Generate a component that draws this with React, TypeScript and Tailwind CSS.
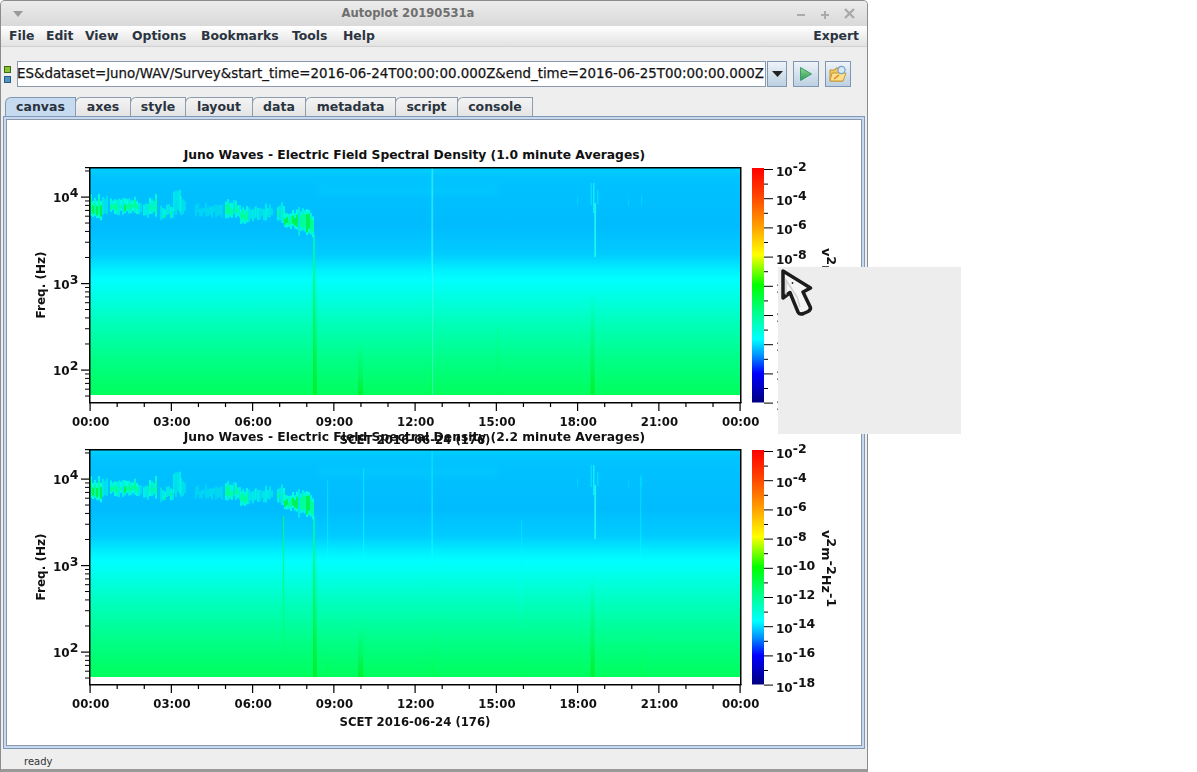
import React from "react";

const FONT = "'DejaVu Sans', sans-serif";

function rng(seed: number) {
  let s = seed;
  return () => {
    s = (s * 16807) % 2147483647;
    return (s - 1) / 2147483646;
  };
}

// [x0, x1, top, bottom, strength] in page coordinates
const BLOBS: [number, number, number, number, number][] = [
  [90, 102, 196, 220, 0.95],
  [102, 108, 196, 214, 0.45],
  [110, 124, 196, 214, 0.75],
  [124, 138, 198, 214, 1],
  [138, 141, 205, 214, 0.55],
  [143, 149, 205, 219, 0.75],
  [149, 157, 196, 215, 0.8],
  [160, 173, 205, 218, 0.6],
  [173, 180, 190, 213, 0.5],
  [180, 186, 198, 213, 0.4],
  [195, 205, 205, 215, 0.18],
  [205, 222, 204, 216, 0.22],
  [225, 240, 201, 218, 0.7],
  [240, 255, 206, 222, 0.65],
  [255, 273, 205, 219, 0.55],
  [277, 284, 204, 222, 0.65],
  [284, 298, 211, 228, 1.15],
  [298, 308, 208, 234, 0.85],
  [308, 314, 212, 237, 1],
];

function Blobs({ seed }: { seed: number }) {
  const r = rng(seed);
  const cols: React.ReactNode[] = [];
  for (const [x0, x1, t, b, s] of BLOBS) {
    for (let x = x0; x < x1; x += 2) {
      const top = t + r() * 7 - 2;
      const bot = b - r() * 6 + 2;
      const c = r();
      const str = s * (0.5 + r() * 0.5);
      cols.push(
        <rect key={`a${x}`} x={x} y={top} width={2} height={bot - top} fill="#00ffdc" opacity={Math.min(0.95, str + 0.2)} />
      );
      if (str > 0.55) {
        cols.push(
          <rect key={`b${x}`} x={x} y={top + 3 + c * 3} width={2} height={Math.max(3, bot - top - 8)} fill={str > 0.78 ? "#00f040" : "#00ff90"} opacity={0.85} />
        );
      }
    }
  }
  return <g>{cols}</g>;
}

function Sup({ x, y, exp }: { x: number; y: number; exp: string }) {
  return (
    <text x={x} y={y} fontSize={12} fontWeight={700} fill="#111">
      10
      <tspan dy={-5} fontSize={12.5}>{exp}</tspan>
    </text>
  );
}

function Plot({ idx, title, lines }: { idx: number; title: string; lines: [number, number, number, string, number][] }) {
  const X0 = 90;
  const W = 650;
  const T = 48; // plot frame top inside the svg
  const B = 282;
  const dec = 86.5;
  const y4 = T + 28.5;
  const minor: number[] = [];
  for (let d = -1; d < 3; d++) {
    for (let k = 2; k <= 9; k++) {
      const y = y4 + (d + 1 - Math.log10(k)) * dec;
      if (y > T && y < B) minor.push(y);
    }
  }
  const xt = Array.from({ length: 25 }, (_, i) => X0 + i * (W / 24));
  const xl = ["00:00", "03:00", "06:00", "09:00", "12:00", "15:00", "18:00", "21:00", "00:00"];
  const bar = Array.from({ length: 17 }, (_, i) => T + 1 + i * 14.6);
  const exps = ["-2", "-4", "-6", "-8", "-10", "-12", "-14", "-16", "-18"];
  return (
    <svg width={854} height={282} className="block overflow-visible" style={{ fontFamily: FONT }}>
      <defs>
        <linearGradient id={`bg${idx}`} x1="0" y1="0" x2="0" y2="1">
          <stop offset="0" stopColor="#00d0ff" />
          <stop offset="0.035" stopColor="#00c4ff" />
          <stop offset="0.1" stopColor="#00c0ff" />
          <stop offset="0.26" stopColor="#00bcff" />
          <stop offset="0.38" stopColor="#00ccff" />
          <stop offset="0.45" stopColor="#00f0ff" />
          <stop offset="0.49" stopColor="#00ffff" />
          <stop offset="0.56" stopColor="#00ffe6" />
          <stop offset="0.7" stopColor="#00ffb4" />
          <stop offset="0.85" stopColor="#00ff84" />
          <stop offset="1" stopColor="#00ff5c" />
        </linearGradient>
        <linearGradient id={`cb${idx}`} x1="0" y1="0" x2="0" y2="1">
          <stop offset="0" stopColor="#ff0000" />
          <stop offset="0.12" stopColor="#ff4400" />
          <stop offset="0.25" stopColor="#ffa000" />
          <stop offset="0.37" stopColor="#ffff00" />
          <stop offset="0.5" stopColor="#00ff00" />
          <stop offset="0.62" stopColor="#00ff90" />
          <stop offset="0.73" stopColor="#00ffff" />
          <stop offset="0.8" stopColor="#0090ff" />
          <stop offset="0.875" stopColor="#0000ff" />
          <stop offset="1" stopColor="#000080" />
        </linearGradient>
        <filter id={`soft${idx}`} x="-5%" y="-20%" width="110%" height="140%">
          <feGaussianBlur stdDeviation="0.5" />
        </filter>
        <filter id={`wide${idx}`} x="-20%" y="-20%" width="140%" height="140%">
          <feGaussianBlur stdDeviation="2.5" />
        </filter>
        <linearGradient id={`dk${idx}`} x1="0" y1="0" x2="0" y2="1">
          <stop offset="0" stopColor="#00ffb0" />
          <stop offset="0.3" stopColor="#00ff70" />
          <stop offset="1" stopColor="#00f020" />
        </linearGradient>
        <linearGradient id={`fade${idx}`} x1="0" y1="0" x2="0" y2="1">
          <stop offset="0" stopColor="#00f040" stopOpacity="0" />
          <stop offset="0.6" stopColor="#00f040" stopOpacity="0.4" />
          <stop offset="1" stopColor="#00f030" stopOpacity="0.95" />
        </linearGradient>
        <linearGradient id={`spike${idx}`} x1="0" y1="0" x2="0" y2="1">
          <stop offset="0" stopColor="#00e8ff" />
          <stop offset="0.45" stopColor="#00ffff" />
          <stop offset="1" stopColor="#00ff40" />
        </linearGradient>
      </defs>
      <g transform="translate(-7,0)">
        <text x={414.5} y={39} textAnchor="middle" fontSize={12.3} fontWeight={700} fill="#111">
          {title}
        </text>
        <rect x={X0} y={T} width={W} height={227} fill={`url(#bg${idx})`} />
        <g transform="translate(0,-120)">
          <rect x={318} y={184} width={180} height={12} fill="#00ccff" opacity={0.4} filter={`url(#wide${idx})`} />
          <g filter={`url(#soft${idx})`}>
            <Blobs seed={4242} />
            <rect x={590.5} y={183} width={1.5} height={22} fill="#00e0ff" opacity={0.9} />
            <rect x={593} y={183} width={1.5} height={30} fill="#10f0ff" opacity={0.9} />
            <rect x={597} y={190} width={1.5} height={14} fill="#00e0ff" opacity={0.8} />
            <rect x={594.3} y={203} width={1.8} height={54} fill="#20ffea" opacity={0.85} />
            <rect x={577} y={196} width={1.2} height={9} fill="#00e0ff" opacity={0.6} />
            <rect x={628} y={199} width={1.2} height={7} fill="#00e0ff" opacity={0.6} />
            <rect x={641} y={195} width={1.2} height={10} fill="#00e0ff" opacity={0.6} />
            <rect x={590.5} y={293} width={4} height={102} fill={`url(#fade${idx})`} />
            <rect x={358} y={345} width={5} height={50} fill={`url(#fade${idx})`} />
            <rect x={313.2} y={235} width={1.5} height={160} fill={`url(#dk${idx})`} />
            <rect x={313} y={255} width={4} height={140} fill={`url(#fade${idx})`} />
          </g>
        </g>
        {lines.map(([x, y0, y1, c, o], i) => (
          <rect key={i} x={x} y={T + y0} width={1.2} height={y1 - y0} fill={c === "s" ? `url(#spike${idx})` : c} opacity={o} />
        ))}
        <rect x={X0 - 1} y={T - 1} width={W + 1.5} height={1.5} fill="#000" />
        <rect x={X0 - 1} y={T - 1} width={1.5} height={236} fill="#000" />
        <rect x={X0 + W} y={T - 1} width={1.5} height={236} fill="#000" />
        <rect x={X0 - 1} y={B} width={W + 2.5} height={1.5} fill="#000" />
        {[0, 1, 2].map((d) => (
          <rect key={d} x={81} y={y4 + d * dec} width={8} height={1.2} fill="#000" />
        ))}
        <rect x={85} y={T - 1} width={4} height={1.2} fill="#000" />
        {minor.map((y, i) => (
          <rect key={i} x={85} y={y} width={4} height={1} fill="#000" />
        ))}
        {xt.map((x, i) => (
          <rect key={i} x={x - 0.5} y={B} width={1.2} height={i % 3 === 0 ? 9 : 5} fill="#000" />
        ))}
        {xl.map((l, i) => (
          <text key={i} x={X0 + 0.7 + i * (W / 8)} y={B + 24} textAnchor="middle" fontSize={11.7} fontWeight={700} fill="#111">
            {l}
          </text>
        ))}
        <text x={415} y={B + 42} textAnchor="middle" fontSize={11.7} fontWeight={700} fill="#111">
          SCET 2016-06-24 (176)
        </text>
        <Sup x={53} y={T + 34} exp="4" />
        <Sup x={53} y={T + 121} exp="3" />
        <Sup x={53} y={T + 207} exp="2" />
        <text transform={`translate(45,${T + 117}) rotate(-90)`} textAnchor="middle" fontSize={12} fontWeight={700} fill="#111">
          Freq. (Hz)
        </text>
        <rect x={752} y={T} width={12} height={234.5} fill={`url(#cb${idx})`} />
        {bar.map((y, i) => (
          <rect key={i} x={764} y={y} width={i % 2 === 0 ? 9 : 4} height={1} fill="#000" />
        ))}
        {exps.map((e, i) => (
          <Sup key={e} x={776} y={T + 8 + i * 29.2} exp={e} />
        ))}
        <text transform={`translate(822,${T + 80}) rotate(90)`} fontSize={12.8} fontWeight={700} fill="#111">
          v<tspan dy={-5}>2</tspan>
          <tspan dy={5}>m</tspan>
          <tspan dy={-5}>-2</tspan>
          <tspan dy={5}>Hz</tspan>
          <tspan dy={-5}>-1</tspan>
        </text>
      </g>
    </svg>
  );
}

const TABS: [string, string][] = [
  ["canvas", "w-[71px]"],
  ["axes", "w-[56px]"],
  ["style", "w-[56px]"],
  ["layout", "w-[68px]"],
  ["data", "w-[54px]"],
  ["metadata", "w-[91px]"],
  ["script", "w-[63px]"],
  ["console", "w-[76px]"],
];
const MENUS: [string, string][] = [
  ["File", "w-[37px]"],
  ["Edit", "w-[39px]"],
  ["View", "w-[47px]"],
  ["Options", "w-[69px]"],
  ["Bookmarks", "w-[91px]"],
  ["Tools", "w-[51px]"],
  ["Help", "w-[40px]"],
];

function BevelButton({ children }: { children: React.ReactNode }) {
  return (
    <div className="w-[26px] h-[26px] flex items-center justify-center border border-[#7f97b2] bg-gradient-to-b from-[#eef3f8] to-[#bcd0e2]">
      {children}
    </div>
  );
}

export default function App() {
  return (
    <div className="relative w-[1197px] h-[772px] overflow-hidden bg-white" style={{ fontFamily: FONT }}>
      <div className="w-[868px] h-[772px] flex flex-col bg-[#eeeeee] border border-[#8c8c8c] rounded-t-[5px] border-b-[3px] border-b-[#9a9a9a] overflow-hidden">
        <div className="relative h-[25px] shrink-0 flex items-center justify-center pr-[52px] bg-gradient-to-b from-[#ececec] to-[#d9d9d9]">
          <svg width="10" height="6" className="absolute left-[12px] top-[10px]" viewBox="0 0 10 6">
            <path d="M0 0H10L5 6Z" fill="#9a9a9a" />
          </svg>
          <span className="text-[11.6px] font-bold text-[#6f6f6f]">Autoplot 20190531a</span>
          <div className="absolute right-[12px] top-[7px] flex gap-[14px] items-center">
            <svg width="10" height="10" viewBox="0 0 10 10"><path d="M1 6H9" stroke="#aaa" strokeWidth="2" /></svg>
            <svg width="10" height="10" viewBox="0 0 10 10"><path d="M1 6H9M5 2V10" stroke="#aaa" strokeWidth="2" /></svg>
            <svg width="11" height="11" viewBox="0 0 11 11"><path d="M1 1L10 10M10 1L1 10" stroke="#aaa" strokeWidth="2.4" /></svg>
          </div>
        </div>
        <div className="h-[21px] shrink-0 flex items-center justify-between pl-[8px] pr-[8px] bg-gradient-to-b from-[#ffffff] to-[#e2e2e2] border-b border-[#d0d0d0] text-[12.4px] font-bold text-[#2a3340]">
          <div className="flex">
            {MENUS.map(([m, w]) => (
              <span key={m} className={w}>{m}</span>
            ))}
          </div>
          <span>Expert</span>
        </div>
        <div className="h-[50px] shrink-0 flex items-center pl-[3px] pt-[4px]">
          <div className="flex flex-col gap-[3px] w-[7px] mr-[6px]">
            <div className="w-[7px] h-[7px] bg-[#86c234] border border-[#3d6b10]" />
            <div className="w-[7px] h-[7px] bg-[#4e94c4] border border-[#2a5b80]" />
          </div>
          <div className="w-[749px] h-[26px] border border-[#8a9aac] bg-white overflow-hidden flex items-center justify-end pr-[1px] text-[13.38px] text-[#111] [-webkit-text-stroke:0.25px_#222] whitespace-nowrap">
            ES&amp;dataset=Juno/WAV/Survey&amp;start_time=2016-06-24T00:00:00.000Z&amp;end_time=2016-06-25T00:00:00.000Z
          </div>
          <div className="ml-[1px] w-[20px] h-[26px] flex items-center justify-center border border-[#7f97b2] bg-gradient-to-b from-[#eef3f8] to-[#bcd0e2]">
            <svg width="11" height="6" viewBox="0 0 11 6"><path d="M0 0H11L5.5 6Z" fill="#222" /></svg>
          </div>
          <div className="ml-[6px]">
            <BevelButton>
              <svg width="12" height="14" viewBox="0 0 12 14">
                <defs>
                  <linearGradient id="play" x1="0" y1="0" x2="0" y2="1">
                    <stop offset="0" stopColor="#90d890" />
                    <stop offset="1" stopColor="#2f9a55" />
                  </linearGradient>
                </defs>
                <path d="M0.5 0.5L11.5 7L0.5 13.5Z" fill="url(#play)" stroke="#3a9a70" strokeWidth="1" />
              </svg>
            </BevelButton>
          </div>
          <div className="ml-[6px]">
            <BevelButton>
              <svg width="18" height="18" viewBox="0 0 18 18">
                <path d="M1 5H6L7 3H14V16H1Z" fill="#f0c860" stroke="#c09030" strokeWidth="1" />
                <path d="M3 8H17L14 16H1Z" fill="#fbdf8a" stroke="#c89a35" strokeWidth="1" />
                <path d="M5 14L10 10" stroke="#e2822b" strokeWidth="1.6" />
                <circle cx="12.5" cy="5" r="3.6" fill="#d6e8f6" stroke="#7aa3c4" strokeWidth="1.2" />
              </svg>
            </BevelButton>
          </div>
        </div>
        <div className="flex items-end h-[19px] shrink-0 pl-[4px] text-[12.5px] font-bold text-[#2a3340]">
          {TABS.map(([t, w], i) => (
            <div
              key={t}
              className={`${w} ${
                i === 0
                  ? "h-[19px] flex items-center justify-center rounded-tl-[6px] border border-b-0 border-[#7f97b2] bg-[#c6dbf0] -mr-[1px]"
                  : "h-[19px] flex items-center justify-center rounded-tl-[6px] border border-b-0 border-[#8d9bad] bg-gradient-to-b from-[#f4f4f4] to-[#e4e4e4] -mr-[1px]"
              }`}
            >
              {t}
            </div>
          ))}
        </div>
        <div className="mx-[2px] h-[633px] shrink-0 border border-[#7f97b8] bg-[#c6d9ee] p-[2px]">
          <div className="h-full border border-[#8a98a8] bg-white overflow-hidden">
            <Plot
              idx={0}
              title="Juno Waves - Electric Field Spectral Density (1.0 minute Averages)"
              lines={[
                [431, 0, 227, "s", 0.7],
                [432, 0, 227, "#60fff0", 0.45],
                [497, 160, 227, "#00f858", 0.3],
              ]}
            />
            <Plot
              idx={1}
              title="Juno Waves - Electric Field Spectral Density (2.2 minute Averages)"
              lines={[
                [283, 66, 227, "#00ff70", 0.9],
                [327, 30, 227, "s", 0.6],
                [363, 18, 227, "s", 0.75],
                [431.5, 0, 227, "s", 0.9],
                [521, 70, 227, "s", 0.55],
                [640, 25, 227, "s", 0.55],
              ]}
            />
          </div>
        </div>
        <div className="flex-1 flex items-center pl-[23px] text-[10px] text-[#333] pt-[4px]">ready</div>
      </div>
      <div className="absolute left-[778px] top-[267px] w-[183px] h-[167px] bg-[#ededed]">
        <svg className="absolute left-0 top-0" width="38" height="52" viewBox="0 0 38 52">
          <path d="M5 4L5 31L12 25.5L20 45Q21.5 48 25.5 46.5L30 44.5Q33.5 42.5 32 39.5L25 25L32.5 21Z" fill="#f6f6f6" stroke="#1c1c1c" strokeWidth="3.5" strokeLinejoin="round" />
          <path d="M8 28L8 13L19 30L22 40" fill="none" stroke="#bdbdbd" strokeWidth="1.5" opacity="0.7" />
          <circle cx="14.5" cy="16" r="0.9" fill="#222" />
        </svg>
      </div>
    </div>
  );
}
